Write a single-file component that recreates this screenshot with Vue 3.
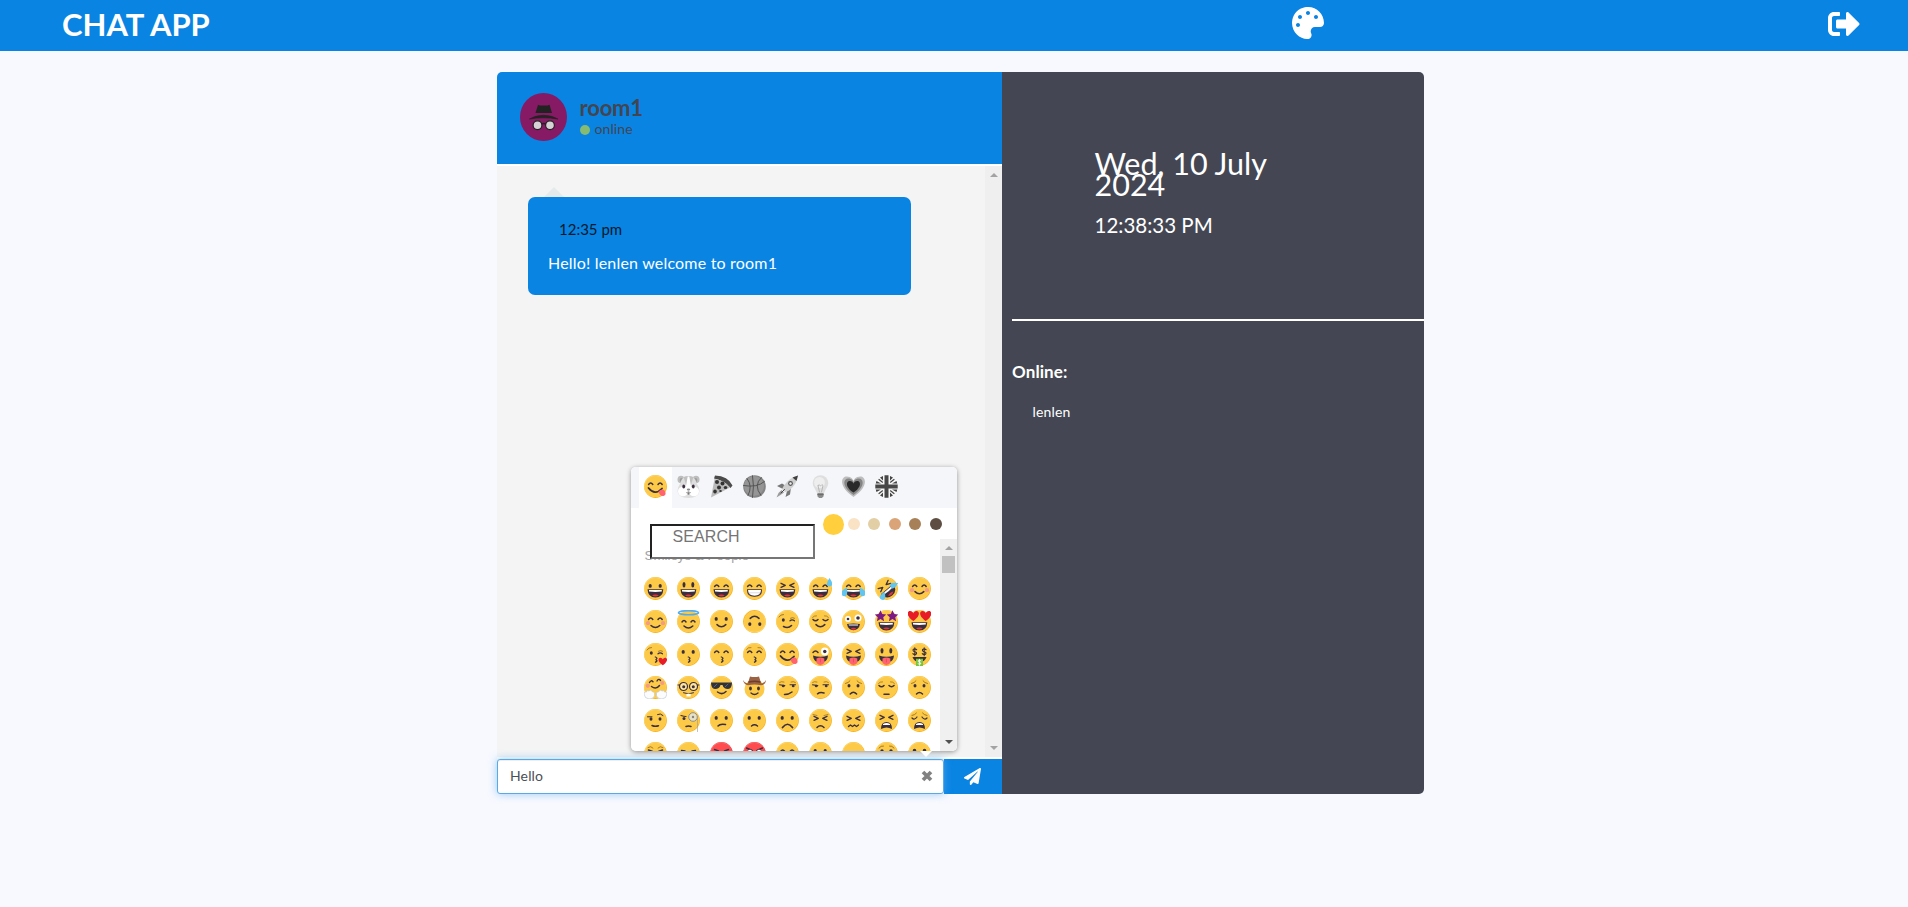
<script setup>
import { ref } from 'vue'

const message = ref('Hello')
const search = ref('')
const users = ['lenlen']
const tones = ['#ffcf3e', '#fae3c5', '#e2cfa5', '#daa478', '#a78058', '#5e4d43']

const INK = '#3b2f3f'
const line = (d, w = 1.5, color = INK) =>
  `<path d="${d}" fill="none" stroke="${color}" stroke-width="${w}" stroke-linecap="round" stroke-linejoin="round"/>`
const fill = (d, color = INK) => `<path d="${d}" fill="${color}"/>`
const dot = (x, y, rx, ry = rx, color = INK) =>
  `<ellipse cx="${x}" cy="${y}" rx="${rx}" ry="${ry}" fill="${color}"/>`

const disc = (base = '#fdca47', shade = '#f9b41f', light = '#ffd873') =>
  dot(11.5, 11.5, 11.4, 11.4, shade) + dot(11.1, 11.1, 10.9, 10.9, light) + dot(11.4, 11.5, 10.6, 10.6, base)
const face = disc()
const redFace = disc('#ff4c4f', '#e8383f', '#ff7576')

const heart = (x, y, s, color = '#e81c27') =>
  `<path transform="translate(${x} ${y}) scale(${s})" d="M0 4C-6 0-5-4-2.600-4-1-4 0-2.800 0-2 0-2.800 1-4 2.600-4 5-4 6 0 0 4z" fill="${color}"/>`
const star = (x, y) =>
  `<path transform="translate(${x} ${y}) scale(1.15)" d="M0-5L1.500-1.700 5-1.300 2.400 1 3.100 4.500 0 2.700-3.100 4.500-2.400 1-5-1.300-1.500-1.700z" fill="#7b1a84"/>`

const eyes = {
  dots: dot(6.2, 8.9, 1.6, 1.9) + dot(16.2, 8.9, 1.6, 1.9),
  tall: dot(7, 7.8, 1.5, 2.7) + dot(15.800, 7.8, 1.5, 2.7),
  arcs: line('M4.600 9.500Q6.700 6.500 8.800 9.500M14 9.500Q16.100 6.500 18.200 9.500'),
  lids: line('M4 9.500Q6.500 12 9 9.500M14 9.500Q16.500 12 19 9.500') + line('M3.500 7.500Q5 5.500 7.500 5.800M19.500 7.500Q18 5.500 15.500 5.800', 0.7, '#8d6522'),
  squeeze: line('M5 6.300L9.300 8.300 5 10.300M18 6.300L13.700 8.300 18 10.300', 1.3),
  wink: dot(7.3, 10, 1.5, 1.8) + line('M14 10.800Q16 9 18.500 10.800', 1.2) + line('M3 7Q4.500 4.300 7.500 4.500M14.500 8.200Q16.500 7 18.500 8.200', 0.8, '#8d6522'),
  side: line('M3.500 8.800L8.800 9.600M14 8.800L19.500 8.800', 1.1) + dot(7.2, 10, 1.4, 1.3) + dot(17.2, 10, 1.4, 1.3) + line('M3.500 6.500Q5 5 8 6M15 6Q18 5 19.500 6.500', 0.7, '#8d6522'),
  sad: dot(7, 9.8, 1.5, 1.8) + dot(16, 9.8, 1.5, 1.8) + line('M3.500 7.500Q6.500 7 8 4.800M19.500 7.500Q16.500 7 15 4.800', 0.8, '#8d6522'),
}

const open = fill('M3.500 12.200H19.300Q19 20.500 11.400 20.500 4 20.500 3.500 12.200z') +
  fill('M5 13H17.800V14.600Q11.400 15.500 5 14.600z', '#fff') + fill('M8 18.300Q11.400 16.500 14.800 18.300 11.400 20.800 8 18.300z', '#e0353d')
const tongue = fill('M4 12.500Q11.400 15 19 12.500 18.500 17 16 18.500H7Q4.500 17 4 12.500z') + fill('M7.500 15.500Q11.400 13.500 15.300 15.500V20Q11.400 24 7.500 20z', '#ff6370') + line('M11.400 16V19', 0.6, '#d9404f')
const smile = line('M7 14.600Q11.400 19 15.800 14.600')
const kiss = line('M11.300 14Q14.200 15 12 16.600 14.200 18 11.500 19.200', 1.3)
const frown = line('M8.200 18Q11.400 14.500 14.600 18')
const blush = dot(4, 13.2, 2.1, 2.1, '#f49a86') + dot(19, 13.2, 2.1, 2.1, '#f49a86')
const drop = (x, y, a = 0, s = 1) => `<path transform="translate(${x} ${y}) rotate(${a}) scale(${s})" d="M0-4.500Q4.200 1.500 2 3.300 0 4.600-2 3.300-4.200 1.500 0-4.500z" fill="#62c5ef"/>`
const teeth = fill('M4 12.200H19Q19.500 19.700 11.500 19.700 3.500 19.700 4 12.200z') + fill('M5 13H18Q18 18.700 11.500 18.700 5 18.700 5 13z', '#fff') + line('M5 15.800H18', 0.4, '#aaa')
const wail = fill('M6 20Q6 13 11.500 13T17 20Q11.500 17 6 20z') + fill('M8 15Q11.500 13 15 15V16H8z', '#fff')
const dollar = (x, y, s = 1, color = INK) =>
  `<g transform="translate(${x} ${y}) scale(${s})">${line('M1.900-2Q0-3.400-1.500-2.300-2.500-.7 0 0 2.500.7 1.500 2.300 0 3.400-1.900 2M0-4V4', 1.1, color)}</g>`

const yum = face + eyes.arcs + line('M4.500 13Q11 21 18 13.500', 1.8) + fill('M14.500 16.500Q18 13 20.500 15.500 23 20 19.500 21 16 21.500 14.500 16.500z', '#ff6370')
const laugh = face + eyes.arcs + open

const rows = [
  [
    face + eyes.dots + open,
    face + eyes.tall + open,
    laugh,
    face + eyes.arcs + teeth,
    face + eyes.squeeze + open,
    laugh + drop(20.500, 5.500),
    laugh + drop(2.700, 15, 25, 1.1) + drop(20.300, 15, -25, 1.1),
    `<g transform="rotate(-40 11.500 11.500)">${face + eyes.squeeze + open}</g>` + drop(8, 19, 20, 1) + drop(19, 8, 65, 1),
    face + eyes.arcs + blush + smile,
  ],
  [
    face + eyes.arcs + blush + line('M7 15.500Q11.400 19.500 15.800 15.500'),
    face + line('M5 12Q7 9 9 12M14 12Q16 9 18 12') + line('M7 16Q11.400 20 15.800 16') + '<ellipse cx="11.500" cy="2.700" rx="10" ry="2" fill="none" stroke="#4fabf2" stroke-width="1.600"/>',
    face + eyes.dots + smile,
    `<g transform="rotate(180 11.500 11.500)">${face + eyes.dots + smile}</g>`,
    face + eyes.wink + line('M7.500 16.500Q12 19 15.500 15.500', 1.6),
    face + eyes.lids + smile,
    face + dot(6, 9, 3, 3, '#fff') + dot(16, 8, 3.500, 3.500, '#fff') + dot(6, 9, 1.3) + dot(16, 8, 1.8) + fill('M5 14Q11.400 13 18 14 17 20 11.400 20.300 6 20 5 14z') + fill('M6.500 14.400H16V15.600H7z', '#fff') + dot(11.5, 18.7, 2.5, 1, '#e0353d'),
    face + star(5.500, 6) + star(17.500, 6) + open,
    face + heart(5.300, 6, 1.25) + heart(17.700, 6, 1.25) + open,
  ],
  [
    face + eyes.wink + kiss + heart(18.800, 18.500, 0.95),
    face + eyes.dots + kiss,
    face + eyes.arcs + kiss,
    face + eyes.arcs + line('M3.500 6.500Q5 4 8 4.500M19.500 6.500Q18 4 15 4.500', 0.7, '#8d6522') + kiss,
    yum,
    face + line('M4 9.500Q6.500 6.500 9 9.500') + dot(15.8, 8.5, 3.9, 3.9, '#fff') + dot(15.8, 8.5, 1.7) + tongue,
    face + eyes.squeeze + tongue,
    face + eyes.tall + tongue,
    face + dollar(6.8, 8.700) + dollar(16.2, 8.700) + fill('M4.500 14H18.500Q17 19 11.500 19T4.500 14z') + fill('M8 15.800H15V23H8z', '#79c53c') + dollar(11.500, 19.300, 0.75, '#fff'),
  ],
  [
    face + line('M5.500 6.500Q7 3.500 9 5.800M13 5Q14.800 2 16.500 4.500', 1.4) + dot(3.8, 9.8, 2.1, 2.1, '#f49a86') + dot(18.3, 7, 2.1, 2.1, '#f49a86') + line('M7.500 10.500Q12 14 15.500 9.500') + ['M0 18Q0 15 2.500 16L3 14.500 5 15 6.500 14 8 15.500 10.500 16.500V20Q9 23 5 23 .5 22.500 0 18z', 'M23 18Q23 15 20.500 16L20 14.500 18 15 16.500 14 15 15.500 12.500 16.500V20Q14 23 18 23 22.500 22.500 23 18z'].map((d) => `<path d="${d}" fill="#fcfcfc" stroke="#c3cbd2" stroke-width=".7"/>`).join(''),
    face + dot(6.5, 10.5, 4.1, 4.1, '#ffe39a') + dot(16.5, 10.5, 4.1, 4.1, '#ffe39a') + `<circle cx="6.500" cy="10.500" r="4" fill="none" stroke="${INK}" stroke-width="1.200"/><circle cx="16.500" cy="10.500" r="4" fill="none" stroke="${INK}" stroke-width="1.200"/>` + dot(6.7, 10.7, 1.5) + dot(16.3, 10.7, 1.5) + line('M1 9H2.500M20.500 9H22', 1) + line('M6.500 16.800Q11.500 19 16.500 16.800', 1) + fill('M9.500 17.800H13.700V20.500H9.500z', '#fff'),
    face + fill('M1 6.500H22Q22 12.500 18 13 13.500 13 12.500 9H10.500Q9.500 13 5 13 1 12.500 1 6.500z', '#30323c') + line('M4 11L7 8M15 11L18 8', 0.7, '#777c88') + line('M7.500 16Q12 19.500 16 15.500'),
    dot(11.5, 13, 10, 10, '#fdca47') + dot(7.5, 12.5, 1.4, 2) + dot(15.5, 12.5, 1.4, 2) + line('M8 17Q11.500 20 15 17', 1.3) + fill('M0 4Q2 8 5 7L7 0.500Q11.500 1.500 16 0.500L18 7Q21 8 23 4 22.500 9 18 9.300 11.500 7.500 5 9.300 1 9 0 4z', '#9b6244') + line('M6 6Q11.500 4.500 17 6', 1.4, '#6d3e2b'),
    face + eyes.side + line('M8.500 18.500Q13 18.500 16 16'),
    face + eyes.side + line('M8.500 17.800Q11 15.800 15 17'),
    face + eyes.sad + frown,
    face + eyes.lids + line('M9 18.300H14'),
    face + eyes.sad + line('M8.500 18Q11.500 15 14.500 18'),
  ],
  [
    face + dot(7, 10, 1.5, 1.7) + dot(16, 10, 1.5, 1.7) + line('M3.500 7.800H8', 1) + line('M13.500 5.500Q16.500 3.800 19 6.500', 1) + line('M8 16.500Q11 18 14.500 16.800'),
    face + dot(7, 9.5, 1.5) + line('M4 6.500Q7 7.500 9 7.500', 1.2) + dot(16, 8, 4.2, 4.2, '#e6e2ca') + '<circle cx="16" cy="8" r="4.300" fill="none" stroke="#928e84" stroke-width="1"/>' + dot(16, 8, 1.2, 1.2, '#8a857a') + line('M9 17.500Q11.500 16.500 14 17.500') + line('M20.500 9V23', 0.6, '#9b9b9b'),
    face + eyes.dots + line('M8 17Q10 14.500 15.500 15.500'),
    face + eyes.dots + line('M8.500 17Q11.500 14.500 14.500 17'),
    face + eyes.dots + line('M6.500 18.500Q11.500 12 16.500 18.500', 1.7),
    face + `<g transform="translate(0 1)">${eyes.squeeze}</g>` + line('M4 5.500L8 6.500M15 6.500L19 5.500', 0.7, '#8d6522') + line('M8 18.500Q11.500 15 15 18.500'),
    face + `<g transform="translate(0 1)">${eyes.squeeze}</g>` + line('M6.500 17.500L8.500 16 10.500 17.500 12.500 16 14.500 17.500 16.500 16', 1.3),
    face + eyes.squeeze + wail,
    face + line('M4 9Q6.500 11.500 9 8M14 8Q16.500 11.500 19 9', 1.2) + line('M4 6.500Q7 6 8.500 4M19 6.500Q16 6 14.500 4', 0.8, '#8d6522') + wail,
  ],
  [
    face + line('M4 5.500Q7 3.500 9 6M19 5.500Q16 3.500 14 6', 0.8, '#8d6522') + line('M4.500 8L8.500 9.500M18.500 8L14.500 9.500', 1.6),
    face + line('M4.500 8.500L8 9M18.500 8.500L15 9', 1.4),
    redFace + line('M4.500 7.500L8.500 9M18.500 7.500L14.500 9', 1.4),
    redFace + line('M3.500 6L9 8.500M19.500 6L14 8.500', 1.5) + dot(7, 9, 1.8, 1.2, '#fff') + dot(16, 9, 1.8, 1.2, '#fff'),
    face + eyes.arcs,
    face + eyes.dots,
    face,
    face + line('M4 6Q6 3.500 8.500 4M19 6Q17 3.500 14.500 4', 0.8, '#8d6522') + dot(7, 9, 1.7) + dot(16, 9, 1.7),
    face + dot(6.5, 8.7, 1.8, 1.9) + dot(16.5, 8.7, 1.8, 1.9),
  ],
]

const tabs = [
  yum,
  // hamster
  dot(4, 4.5, 3.5, 3.8, '#bdbdbd') + dot(19, 4.5, 3.5, 3.8, '#bdbdbd') + dot(4.5, 5, 1.8, 2, '#9d9d9d') + dot(18.5, 5, 1.8, 2, '#9d9d9d') +
    fill('M11.500 1Q18 1 19.500 8 22.500 12 22.500 16 22 23 11.500 23T.5 16Q.5 12 3.500 8 5 1 11.500 1z', '#dedede') + fill('M6.500 2Q11.500 0 16.500 2L13.500 11H9.500z', '#c0c0c0') + dot(6, 16.500, 5, 4.8, '#fff') + dot(17, 16.500, 5, 4.8, '#fff') + fill('M10.700 1.500H12.300L14.500 14H8.500z', '#fff') + dot(6.7, 11.5, 1.4, 1.9) + dot(16.3, 11.5, 1.4, 1.9) + dot(11.5, 14.6, 1.7, 1, '#8a8a8a') + line('M9.500 17.500Q11.500 16 13.500 17.500', 0.7, '#777') + dot(11.5, 18.500, 1, 1.3, '#777'),
  // pizza
  fill('M5 .5Q18 1 22.500 10.500L20.500 13Q14 5 4 3.500z', '#4b4b4b') + fill('M4.500 4Q14.500 5 20 12.500L1 22.500z', '#bababa') + dot(7, 7, 2, 2, '#333') + dot(12.5, 8.5, 2, 2, '#333') + dot(9, 12.5, 2, 2, '#333') + dot(15.5, 12.5, 1.8, 1.6, '#333') + dot(5, 16.5, 1.8, 2, '#333') + dot(10.5, 16, 1.3, 1.1, '#333'),
  // basketball
  dot(11.5, 11.5, 11.3, 11.3, '#848484') + dot(11, 11, 10, 10, '#959595') + line('M9.500.7Q11.500 11 9.500 22.500M.5 10.500Q14 13 21.500 6.500M4 3.500Q10 11 5 20.500M18.500 2.500Q10 10 18 20.500', 0.9, '#4e4e4e'),
  // rocket
  fill('M1 11L6 8.500 10 11 7 14zM11 16L15 12.500 14 19.500 9.500 22z', '#777') + fill('M22 .5Q14.500 2 8 10.500L6 14 9 17Q14.500 16 19 9 21.500 5 22 .5z', '#cfcfcf') + fill('M22 .5L16.500 2.500 20.500 6z', '#404040') + dot(14.5, 8.5, 2.4, 2.4, '#555') + dot(14.500, 8.5, 1.2, 1.2, '#eee') + fill('M5.500 15L8 17.500 4.500 20 .5 22.500 2.500 18z', '#9b9b9b') + line('M8.500 14.500L5 18', 1, '#444'),
  // light bulb
  dot(11.5, 8, 7.8, 7.800, '#dedede') + fill('M5 12H18L14.800 18.500H8.200z', '#dedede') + dot(10.5, 7.5, 5.4, 5.6, '#eee') + line('M9 10.500Q10 8.500 11.500 11 13 8.500 14 10.500L12.500 17M9 10.500L10.500 17', 0.6, '#999') + fill('M8.500 18H14.500V21.500L12.800 23H10.200L8.500 21.500z', '#8d8d8d') + line('M8.500 19.700H14.500', 0.7, '#555'),
  // growing heart
  heart(11.5, 11.7, 2.55, '#bdbdbd') + heart(11.5, 11.7, 2.05, '#858585') + heart(11.5, 11.700, 1.45, '#292929'),
  // flag
  dot(11.5, 11.5, 11.3, 11.3, '#f6f6f6') + line('M4 4.500L7.500 7.200M19 18.500L15.500 15.800M19 4.500L15.500 7.200M4 18.500L7.500 15.800', 1.2, '#444') + fill('M5 2.500L8 1V5.500zM18 2.500L15 1V5.500zM1.500 6L6 8.500H.7zM21.500 6L17 8.500H22.300zM.7 14.500H6L1.500 17zM22.300 14.500H17L21.500 17zM8 17.500V22L5 20.500zM15 17.500V22L18 20.500z', '#444') + fill('M9.500.3H13.500V9.500H22.700V13.500H13.500V22.700H9.500V13.500H.3V9.500H9.500z', '#474747'),
]
</script>

<template>
  <div class="page">
    <header class="topbar">
      <h1 class="brand">CHAT APP</h1>
      <svg class="top-icon" viewBox="0 0 512 512"><path fill="currentColor" d="M204.300 5C104.900 24.400 24.800 104.300 5.200 203.400c-37 187 131.700 326.400 258.800 306.700 41.200-6.400 61.400-54.600 42.500-91.700-23.100-45.400 9.900-98.400 60.900-98.400h79.700c35.800 0 64.800-29.600 64.900-65.300C511.500 97.100 368.100-26.900 204.300 5zM96 320c-17.700 0-32-14.300-32-32s14.300-32 32-32 32 14.300 32 32-14.300 32-32 32zm32-128c-17.700 0-32-14.300-32-32s14.300-32 32-32 32 14.300 32 32-14.300 32-32 32zm128-64c-17.700 0-32-14.300-32-32s14.300-32 32-32 32 14.300 32 32-14.300 32-32 32zm128 64c-17.700 0-32-14.300-32-32s14.300-32 32-32 32 14.300 32 32-14.300 32-32 32z" /></svg>
      <svg class="top-icon logout" viewBox="0 0 512 512"><path fill="currentColor" d="M497 273L329 441c-15 15-41 4.500-41-17v-96H152c-13.300 0-24-10.700-24-24v-96c0-13.300 10.700-24 24-24h136V88c0-21.400 25.900-32 41-17l168 168c9.300 9.400 9.300 24.600 0 34zM192 436v-40c0-6.600-5.400-12-12-12H96c-17.700 0-32-14.300-32-32V160c0-17.700 14.300-32 32-32h84c6.600 0 12-5.400 12-12V76c0-6.600-5.400-12-12-12H96c-53 0-96 43-96 96v192c0 53 43 96 96 96h84c6.600 0 12-5.400 12-12z" /></svg>
    </header>

    <main class="container">
      <section class="chat">
        <div class="chat-header">
          <svg class="avatar" viewBox="0 0 47 48">
            <ellipse cx="23.500" cy="24" rx="23.500" ry="24" fill="#861a64" />
            <path d="M18 11.700Q20.500 13 23.500 12.400 27 13 29.500 11.700L32 20H15.500z" fill="#222" />
            <path d="M9.500 26Q15 22.500 23.500 22.300 32 22.500 38 26 31 24.800 23.500 24.800T9.500 26z" fill="#222" stroke="#222" stroke-width=".7" />
            <g fill="#d6d2d5" stroke="#222" stroke-width="1.200"><circle cx="17.500" cy="32.200" r="4.400" /><circle cx="30" cy="32.200" r="4.400" /></g>
            <path d="M21.800 31Q23.700 30 25.800 31" fill="none" stroke="#222" stroke-width="1.400" />
          </svg>
          <div class="about">
            <div class="room">room1</div>
            <div class="status"><i class="status-dot"></i>online</div>
          </div>
        </div>

        <div class="history">
          <div class="messages">
            <div class="bubble">
              <div class="time">12:35 pm</div>
              <div class="text">Hello! lenlen welcome to room1</div>
            </div>
          </div>
          <div class="rail"><i class="arrow up"></i><i class="arrow down"></i></div>
        </div>

        <div class="composer">
          <div class="field">
            <input v-model="message" class="message" type="text" />
            <svg class="close" viewBox="0 0 12 12"><path d="M2 2L10 10M10 2L2 10" stroke="#828282" stroke-width="3.700" /></svg>
          </div>
          <button class="send">
            <svg viewBox="0 0 512 512"><path fill="#fff" d="M476 3.200L12.500 270.600c-18.100 10.400-15.800 35.600 2.200 43.200L121 358.400l287.300-253.200c5.500-4.900 13.300 2.600 8.600 8.300L176 407v80.500c0 23.600 28.500 32.900 42.500 15.800L282 426l124.600 52.200c14.200 6 30.400-2.900 33-18.200l72-432C515 7.800 493.300-6.800 476 3.200z" /></svg>
          </button>
        </div>

        <div class="picker">
          <div class="picker-body">
            <nav class="tabs">
              <button v-for="(t, i) in tabs" :key="i" class="tab" :class="{ active: i === 0 }">
                <svg viewBox="0 0 23 23" v-html="t"></svg>
              </button>
            </nav>
            <div class="tones">
              <span v-for="(c, i) in tones" :key="c" class="tone" :class="{ picked: i === 0 }" :style="{ background: c }"></span>
            </div>
            <div class="list">
              <div class="faces">
                <div class="category">Smileys &amp; People</div>
                <div class="grid">
                  <template v-for="(row, r) in rows" :key="r">
                    <svg v-for="(e, i) in row" :key="i" viewBox="0 0 23 23" v-html="e"></svg>
                  </template>
                </div>
              </div>
              <div class="rail small"><i class="arrow up"></i><i class="thumb"></i><i class="arrow down dark"></i></div>
            </div>
            <input v-model="search" class="search" placeholder="SEARCH" />
          </div>
          <i class="pointer"></i>
        </div>
      </section>

      <aside class="side">
        <div class="clock">
          <div class="date">Wed, 10 July 2024</div>
          <div class="now">12:38:33 PM</div>
        </div>
        <div class="people">
          <h2>Online:</h2>
          <div v-for="u in users" :key="u" class="user">{{ u }}</div>
        </div>
      </aside>
    </main>
  </div>
</template>

<style>
body { background: #f8f9ff; }
</style>

<style scoped>
.page { height: 907px; overflow: hidden; font-family: Lato, "Liberation Sans", sans-serif; }
.page, .page * { box-sizing: border-box; }
.page svg { display: block; }
button { border: 0; padding: 0; background: none; }
.topbar { height: 51px; background: #0984e3; color: #fff; display: flex; padding: 0 48px 0 62px; }
.brand { margin: 0; width: 1230px; font-size: 31px; line-height: 48px; font-weight: 700; }
.top-icon { width: 32px; height: 32px; margin-top: 7px; }
.logout { margin: 8px 0 0 auto; }

.container { width: 927px; height: 722px; margin: 21px 0 0 497px; display: flex; border-radius: 5px; }
.chat { position: relative; width: 505px; display: flex; flex-direction: column; }
.chat-header { height: 94px; flex: none; padding: 21px 0 0 23px; display: flex; background: #0984e3; border-bottom: 2px solid #fff; border-radius: 5px 0 0 0; color: #434651; }
.avatar { width: 47px; height: 48px; }
.about { margin: 3px 0 0 12.500px; }
.room { font-size: 22px; line-height: 24px; font-weight: 700; letter-spacing: -.2px; }
.status { display: flex; align-items: center; font-size: 14px; line-height: 18px; letter-spacing: .1px; }
.status-dot { width: 10px; height: 10px; margin: 1px 5px 0 0; border-radius: 50%; background: #86bb71; }

.history { height: 593px; display: flex; background: #f4f4f4; border-bottom: 2px solid #fff; }
.messages { flex: 1; padding: 31px 0 0 31px; }
.bubble { position: relative; width: 383px; height: 98px; padding: 19px 20px; border-radius: 7px; background: #0984e3; font-size: 16px; line-height: 26px; color: #fff; }
.bubble::before { content: ""; position: absolute; left: 16px; top: -10px; border: 10px solid transparent; border-top: 0; border-bottom-color: #e6eaea; }
.time { padding-left: 11px; color: #06192a; margin-bottom: 8px; font-size: 15px; }
.text { letter-spacing: .19px; }
.rail { width: 17px; padding: 7px 0; background: #efefef; display: flex; flex-direction: column; align-items: center; }
.arrow { width: 0; height: 0; border: 4px solid transparent; }
.arrow.up { border-top: 0; border-bottom-color: #a3a3a3; }
.arrow.down { margin-top: auto; border-bottom: 0; border-top-color: #a3a3a3; }
.arrow.dark { border-top-color: #505050; }

.composer { display: flex; height: 35px; }
.field { position: relative; width: 447px; }
.message { display: block; width: 100%; height: 35px; padding: 0 30px 2px 12px; border: 1px solid #58a9e9; border-radius: 3px; outline: 0; background: #fff; box-shadow: inset 0 1px 1px rgba(0, 0, 0, .075), 0 0 9px rgba(102, 175, 233, .65); color: #4b4f56; font: 14px Lato, sans-serif; letter-spacing: .15px; }
.close { position: absolute; right: 11px; top: 10.500px; width: 12px; height: 12px; }
.send { width: 58px; padding: 0 2px 1px 0; background: #0984e3; display: flex; align-items: center; justify-content: center; }
.send svg { width: 17px; height: 17px; }

.picker { position: absolute; left: 134px; top: 395px; width: 326px; height: 284px; border-radius: 5px; box-shadow: 0 1px 5px rgba(0, 0, 0, .4); }
.picker-body { position: relative; height: 100%; overflow: hidden; background: #fff; border-radius: 5px; display: flex; flex-direction: column; font-family: "Liberation Sans", Arial, sans-serif; }
.tabs { height: 41px; flex: none; padding-left: 8px; display: flex; background: #f5f6f9; }
.tab { width: 33px; height: 41px; padding: 0 5.500px 0 4.500px; }
.tab.active { background: #fff; }
.tab svg { width: 23px; height: 23px; margin-top: -3px; }
.tones { height: 27px; flex: none; margin-bottom: 4px; padding: 5px 15px 0 192px; display: flex; align-items: center; justify-content: space-between; }
.tone { width: 12px; height: 12px; border-radius: 50%; }
.tone.picked { width: 21px; height: 21px; margin-right: -5px; }
.list { flex: 1; min-height: 0; display: flex; }
.faces { flex: 1; overflow: hidden; padding-left: 12.500px; }
.category { height: 38px; padding: 9px 0 0 1px; color: #a3a3a3; font-size: 13.330px; line-height: 16px; }
.grid { display: grid; grid-template-columns: repeat(9, 23px); column-gap: 10px; row-gap: 10px; }
.grid svg { width: 23px; height: 23px; }
.small { background: #f0f0f0; }
.thumb { width: 13px; height: 17px; margin-top: 6px; background: #c1c1c1; }
.search { position: absolute; left: 19px; top: 57px; width: 165px; height: 35px; padding: 0 20px 10px 20.500px; border: 2px solid; border-color: #222 #767676 #767676 #222; border-radius: 0; outline: 0; background: #fff; font: 16px "Liberation Sans", Arial, sans-serif; letter-spacing: .1px; }
.search::placeholder { color: #757575; }
.pointer { position: absolute; left: 289px; top: 284px; border: 6.500px solid transparent; border-bottom: 0; border-top-color: #fff; }

.side { flex: 1; padding-left: 10px; background: #444753; border-radius: 0 5px 5px 0; color: #fff; }
.clock { height: 249px; border-bottom: 2px solid #fff; padding: 81px 0 0 82.500px; }
.date { width: 200px; font-size: 30.500px; line-height: 21px; }
.now { margin-top: 16px; font-size: 20.500px; line-height: 28px; }
.people { padding-top: 39px; }
.people h2 { margin: 0; font-size: 17px; line-height: 24px; font-weight: 700; letter-spacing: .1px; }
.user { padding: 18px 0 0 20.500px; font-size: 14px; line-height: 20px; letter-spacing: .15px; }
</style>
